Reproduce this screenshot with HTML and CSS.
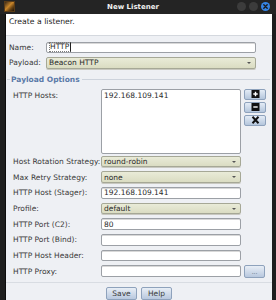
FILE: index.html
```html
<!DOCTYPE html>
<html lang="en">
<head>
    <meta charset="UTF-8">
    <title>New Listener</title>
    <link rel="stylesheet" href="styles.css">
</head>
<body>
    <div class="window">
        <div class="titlebar">
            <div class="app-icon"></div>
            <div class="title">New Listener</div>
            <div class="win-btns">
                <span class="win-btn"></span>
                <span class="win-btn"></span>
                <span class="win-btn close">
                    <svg width="9" height="9" viewBox="0 0 9 9"><path d="M2.8 2.8 L6.2 6.2 M6.2 2.8 L2.8 6.2" stroke="#1a1a1a" stroke-width="1.4" stroke-linecap="round"/></svg>
                </span>
            </div>
        </div>

        <div class="frame">
            <div class="header">Create a listener.</div>

            <div class="body">
                <div class="top-rows">
                    <div class="row">
                        <label>Name:</label>
                        <div class="field input"><span class="caret">HTTP</span></div>
                    </div>
                    <div class="row">
                        <label>Payload:</label>
                        <div class="field select">Beacon HTTP<span class="arrow"></span></div>
                    </div>
                </div>

                <div class="options">
                    <div class="legend"><span class="line short"></span><span class="legend-text">Payload Options</span><span class="line"></span></div>

                    <div class="hosts-row">
                        <label>HTTP Hosts:</label>
                        <div class="hosts-box">192.168.109.141</div>
                        <div class="side-btns">
                            <span class="side-btn">
                                <svg width="9" height="8" viewBox="0 0 9 8"><rect x="0.5" y="0" width="8" height="8" fill="#111"/><path d="M4.5 1.8 V6.2 M2.3 4 H6.7" stroke="#fff" stroke-width="1.4"/></svg>
                            </span>
                            <span class="side-btn">
                                <svg width="9" height="8" viewBox="0 0 9 8"><rect x="0.5" y="0" width="8" height="8" fill="#111"/><path d="M2.3 4 H6.7" stroke="#fff" stroke-width="1.4"/></svg>
                            </span>
                            <span class="side-btn">
                                <svg width="9" height="8" viewBox="0 0 9 8"><path d="M1.5 0.8 L7.5 7.2 M7.5 0.8 L1.5 7.2" stroke="#111" stroke-width="2"/></svg>
                            </span>
                        </div>
                    </div>

                    <div class="opt-rows">
                        <div class="row">
                            <label>Host Rotation Strategy:</label>
                            <div class="field select">round-robin<span class="arrow"></span></div>
                        </div>
                        <div class="row">
                            <label>Max Retry Strategy:</label>
                            <div class="field select">none<span class="arrow"></span></div>
                        </div>
                        <div class="row">
                            <label>HTTP Host (Stager):</label>
                            <div class="field input">192.168.109.141</div>
                        </div>
                        <div class="row">
                            <label>Profile:</label>
                            <div class="field select">default<span class="arrow"></span></div>
                        </div>
                        <div class="row">
                            <label>HTTP Port (C2):</label>
                            <div class="field input">80</div>
                        </div>
                        <div class="row">
                            <label>HTTP Port (Bind):</label>
                            <div class="field input"></div>
                        </div>
                        <div class="row">
                            <label>HTTP Host Header:</label>
                            <div class="field input"></div>
                        </div>
                        <div class="row">
                            <label>HTTP Proxy:</label>
                            <div class="field input"></div>
                            <span class="btn dots">...</span>
                        </div>
                    </div>
                </div>

                <div class="footer">
                    <span class="btn">Save</span>
                    <span class="btn">Help</span>
                </div>
            </div>
        </div>
    </div>
</body>
</html>
```

FILE: styles.css
```css
* {
    margin: 0;
    padding: 0;
    box-sizing: border-box;
}

body {
    font-family: 'DejaVu Sans', sans-serif;
    font-size: 7.5px;
    color: #3a3a3a;
    background: #3a3a3a;
}

.window {
    width: 276px;
    height: 300px;
    background: #1e1e1e;
    display: flex;
    flex-direction: column;
    overflow: hidden;
}

.titlebar {
    height: 14px;
    display: flex;
    align-items: center;
    background: #242424;
}

.app-icon {
    width: 11px;
    height: 11px;
    margin-left: 4px;
    background: linear-gradient(135deg, #3b2a18 0%, #c9862a 45%, #6b4514 70%, #1d1208 100%);
    border: 1px solid #5a3c18;
}

.title {
    flex: 1;
    text-align: center;
    color: #f0f0f0;
    font-weight: bold;
    font-size: 7px;
    padding-left: 14px;
}

.win-btns {
    display: flex;
    gap: 3px;
    margin-right: 6px;
}

.win-btn {
    width: 9px;
    height: 9px;
    border-radius: 50%;
    background: #3c3c3c;
    display: flex;
    align-items: center;
    justify-content: center;
}

.win-btn.close {
    background: #3584e4;
}

.frame {
    flex: 1;
    margin: 0 4px 0 5px;
    border-left: 1px solid #0c0c0c;
    display: flex;
    flex-direction: column;
    background: #eef0f4;
}

.header {
    height: 22px;
    background: #fff;
    padding: 3px 0 0 3px;
    font-size: 7.7px;
    color: #222;
    border-bottom: 1px solid #d4d8de;
}

.body {
    flex: 1;
    display: flex;
    flex-direction: column;
}

.top-rows {
    display: flex;
    flex-direction: column;
    gap: 3.5px;
    padding: 6px 16px 0 3px;
}

.row {
    display: flex;
    align-items: center;
    height: 11.7px;
}

.top-rows label {
    width: 37px;
}

.field {
    height: 11.7px;
    flex: 1;
    border: 1px solid #9ca0a6;
    border-radius: 2px;
    padding: 0 2px;
    display: flex;
    align-items: center;
    position: relative;
    white-space: nowrap;
    color: #2a2a2a;
}

.input {
    background: #fff;
    box-shadow: inset 0 1px 0 #d8d8d8;
}

.caret {
    border: 1px dotted #7a7a7a;
    border-right: 1px solid #222;
    padding: 0 1px 0 0;
    line-height: 8px;
}

.select {
    background: linear-gradient(#e9ebd8, #dadcc2);
    border-color: #a6a896;
    box-shadow: 0 1px 0 #c8c8c0;
}

.arrow {
    position: absolute;
    right: 4px;
    top: 4px;
    border-left: 2px solid transparent;
    border-right: 2px solid transparent;
    border-top: 2px solid #555;
}

.options {
    display: flex;
    flex-direction: column;
}

.legend {
    display: flex;
    align-items: center;
    margin-top: 5px;
    height: 12px;
}

.line {
    flex: 1;
    height: 1px;
    background: #cdd3dc;
    margin-right: 2px;
}

.line.short {
    flex: none;
    width: 3px;
    margin: 0 1px 0 1px;
}

.legend-text {
    color: #5b7aa8;
    font-weight: bold;
    font-size: 7.5px;
    margin-right: 2px;
}

.hosts-row {
    display: flex;
    align-items: flex-start;
    margin-top: 3px;
    padding-left: 7px;
}

.hosts-row label {
    width: 88px;
    margin-top: 2px;
}

.hosts-box {
    width: 140px;
    height: 65px;
    background: #fff;
    border: 1px solid #9ca0a6;
    border-radius: 2px;
    padding: 1px 2px;
    color: #2a2a2a;
}

.side-btns {
    display: flex;
    flex-direction: column;
    gap: 2px;
    margin-left: 3px;
}

.side-btn {
    width: 22px;
    height: 11px;
    border: 1px solid #8ea2bc;
    border-radius: 2px;
    background: linear-gradient(#e4ecf6, #b4c6dc);
    display: flex;
    align-items: center;
    justify-content: center;
}

.opt-rows {
    display: flex;
    flex-direction: column;
    gap: 4px;
    margin-top: 2px;
    padding-left: 7px;
}

.opt-rows label {
    width: 88px;
}

.opt-rows .field {
    flex: none;
    width: 140px;
}

.btn {
    height: 12px;
    border: 1px solid #8ea2bc;
    border-radius: 2px;
    background: linear-gradient(#e8eef6, #b8c8de);
    color: #3a3a3a;
    display: flex;
    align-items: center;
    justify-content: center;
}

.btn.dots {
    width: 21px;
    height: 13px;
    margin-left: 3px;
    font-size: 6px;
    color: #4a5a70;
}

.footer {
    margin-top: 5px;
    border-top: 1px solid #d8dce2;
    flex: 1;
    display: flex;
    justify-content: center;
    gap: 4px;
    padding-top: 4px;
}

.footer .btn {
    width: 31px;
    height: 13px;
}
```
